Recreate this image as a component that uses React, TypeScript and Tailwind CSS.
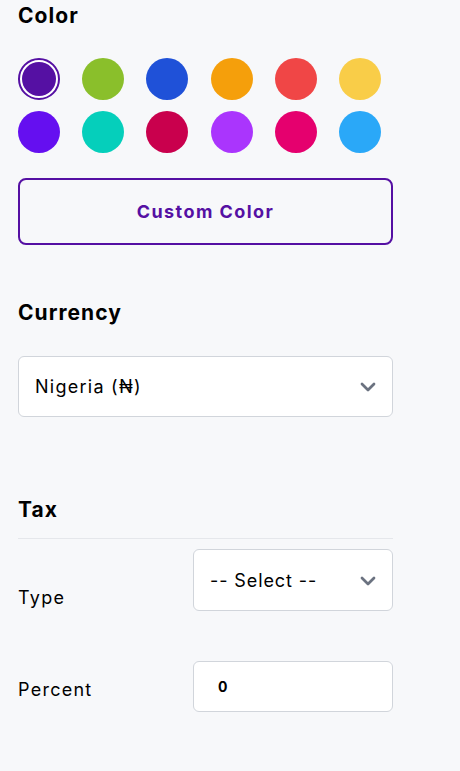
import { ChevronDown } from 'lucide-react';

const colors = [
  '#5510a3',
  '#8abf2b',
  '#1f51d8',
  '#f59f0b',
  '#f04646',
  '#f9cd48',
  '#650ff0',
  '#05cfbb',
  '#c9004d',
  '#aa35fd',
  '#e5006e',
  '#2aa8f8',
];

const font = { fontFamily: 'Inter, "Noto Sans", sans-serif' };

export default function App() {
  return (
    <div className="min-h-screen bg-[#f7f8fa] text-black" style={font}>
      <div className="w-[375px] ml-[18px] pb-10">
        {/* Color */}
        <h2 className="text-[21px] font-bold leading-none pt-[5px] tracking-[0.05em]">Color</h2>
        <div className="grid grid-cols-6 gap-x-[22px] gap-y-[11px] mt-[32px] w-[363px]">
          {colors.map((c, i) => (
            <button
              key={c}
              className={
                i === 0
                  ? 'w-[42px] h-[42px] rounded-full border-2 border-[#5510a3] p-[2px] bg-white'
                  : 'w-[42px] h-[42px] rounded-full'
              }
              style={i === 0 ? undefined : { backgroundColor: c }}
            >
              {i === 0 && <span className="block w-full h-full rounded-full" style={{ backgroundColor: c }} />}
            </button>
          ))}
        </div>
        <button className="mt-[25px] w-full h-[67px] rounded-lg border-2 border-[#5510a3] text-[#5510a3] text-[18px] font-bold tracking-[0.08em]">
          Custom Color
        </button>

        {/* Currency */}
        <h2 className="text-[21px] font-bold leading-none mt-[57px] tracking-[0.05em]">Currency</h2>
        <div className="mt-[33px] h-[61px] rounded-md border border-[#d1d5db] bg-white flex items-center justify-between pl-4 pr-[12px]">
          <span className="text-[18px] tracking-[0.07em]">Nigeria (₦)</span>
          <ChevronDown className="w-6 h-6 text-[#6b7280]" strokeWidth={2.75} />
        </div>

        {/* Tax */}
        <h2 className="text-[21px] font-bold leading-none mt-[82px] tracking-[0.05em]">Tax</h2>
        <div className="mt-[18px] border-t border-[#e5e7eb]" />
        <div className="flex items-end justify-between mt-[10px]">
          <span className="text-[18px] leading-none pb-[4px] tracking-[0.07em]">Type</span>
          <div className="w-[200px] h-[62px] rounded-md border border-[#d1d5db] bg-white flex items-start justify-between pl-4 pr-[12px] pt-[22px]">
            <span className="text-[18px] leading-none tracking-[0.05em]">-- Select --</span>
            <ChevronDown className="w-6 h-6 text-[#6b7280] -mt-[3px]" strokeWidth={2.75} />
          </div>
        </div>
        <div className="flex items-center justify-between mt-[50px]">
          <span className="text-[18px] leading-none pt-[6px] tracking-[0.07em]">Percent</span>
          <div className="w-[200px] h-[51px] rounded-md border border-[#d1d5db] bg-white flex items-center pl-[24px]">
            <span className="text-[14px] font-bold">0</span>
          </div>
        </div>
      </div>
    </div>
  );
}
